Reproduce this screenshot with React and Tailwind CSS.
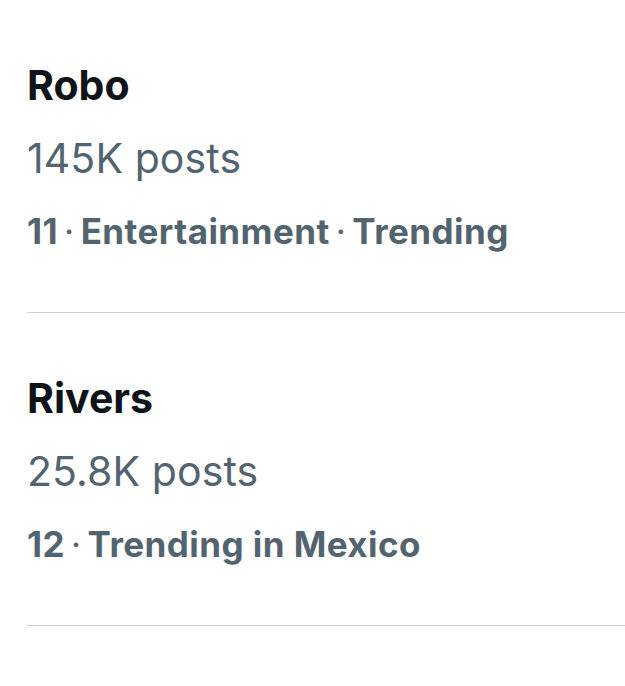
import React from 'react';

const trends = [
  { title: 'Robo', posts: '145K posts', rank: '11', meta: ['Entertainment', 'Trending'] },
  { title: 'Rivers', posts: '25.8K posts', rank: '12', meta: ['Trending in Mexico'] },
];

const TrendItem = ({ trend }) => (
  <div className="ml-[27px] border-b border-[#cdd1d4] pt-[49px] pb-[45px] pr-4">
    <div className="text-[41px] leading-[73px] font-bold text-[#0f1419]">
      {trend.title}
    </div>
    <div className="text-[41px] leading-[73px] text-[#536471] tracking-[0.1px]">{trend.posts}</div>
    <div className="text-[35px] leading-[72px] font-bold text-[#536471] tracking-[0.45px]">
      {trend.rank}
      {trend.meta.map((m) => (
        <span key={m}>
          <span className="font-normal mx-[6px]">·</span>
          {m}
        </span>
      ))}
    </div>
  </div>
);

const App = () => {
  return (
    <div
      className="w-[625px] h-[686px] bg-white overflow-hidden"
      style={{ fontFamily: 'Inter, "Noto Sans", sans-serif' }}
    >
      {trends.map((t) => (
        <TrendItem key={t.title} trend={t} />
      ))}
    </div>
  );
};

export default App;
